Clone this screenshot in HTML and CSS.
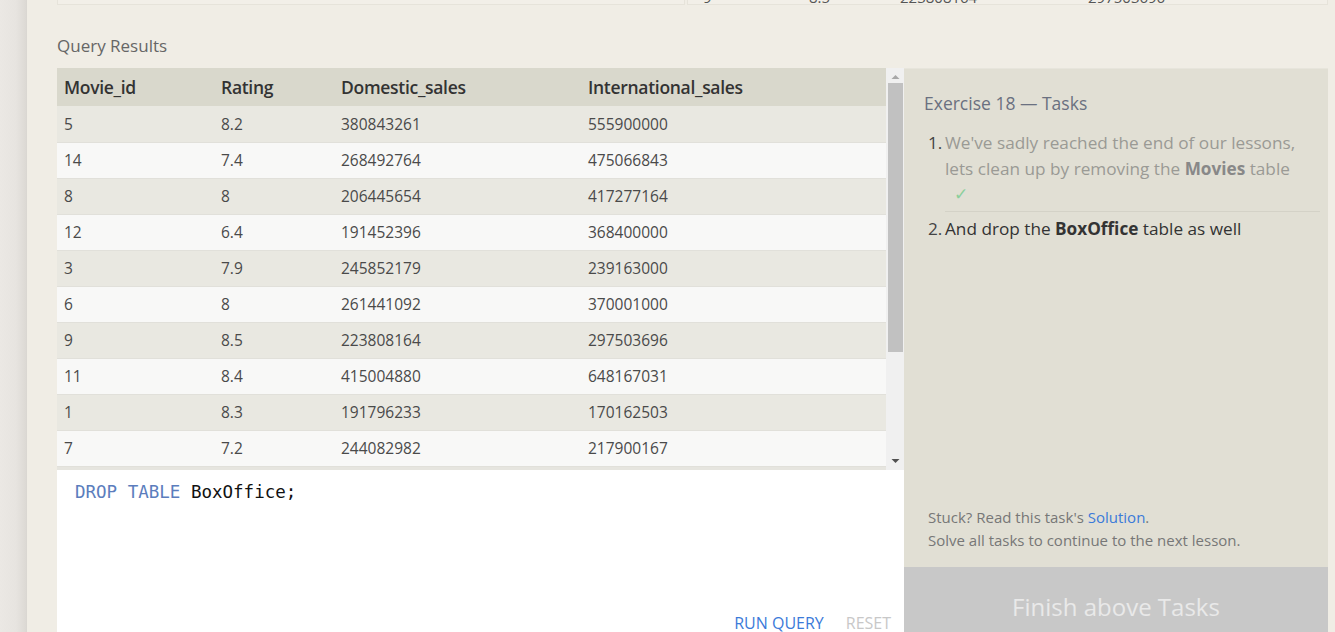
FILE: index.html
```html
<!DOCTYPE html>
<html lang="en">
<head>
<meta charset="utf-8">
<title>SQL Lesson — Exercise 18</title>
<link rel="stylesheet" href="styles.css">
</head>
<body>
<div class="page">
  <div class="gutter"></div>
  <main class="main">
    <div class="prev">
      <div class="prev-box"></div>
      <div class="prev-box prev-right">
        <div class="prev-row">
          <span class="pc pc1">9</span>
          <span class="pc pc2">8.5</span>
          <span class="pc pc3">223808164</span>
          <span class="pc pc4">297503696</span>
        </div>
      </div>
    </div>

    <h2 class="section-title">Query Results</h2>

    <div class="workspace">
      <div class="left">
        <div class="results">
          <div class="table-wrap">
            <table class="grid">
              <colgroup>
                <col class="c1"><col class="c2"><col class="c3"><col class="c4">
              </colgroup>
              <thead>
                <tr><th>Movie_id</th><th>Rating</th><th>Domestic_sales</th><th>International_sales</th></tr>
              </thead>
              <tbody>
                <tr><td>5</td><td>8.2</td><td>380843261</td><td>555900000</td></tr>
                <tr><td>14</td><td>7.4</td><td>268492764</td><td>475066843</td></tr>
                <tr><td>8</td><td>8</td><td>206445654</td><td>417277164</td></tr>
                <tr><td>12</td><td>6.4</td><td>191452396</td><td>368400000</td></tr>
                <tr><td>3</td><td>7.9</td><td>245852179</td><td>239163000</td></tr>
                <tr><td>6</td><td>8</td><td>261441092</td><td>370001000</td></tr>
                <tr><td>9</td><td>8.5</td><td>223808164</td><td>297503696</td></tr>
                <tr><td>11</td><td>8.4</td><td>415004880</td><td>648167031</td></tr>
                <tr><td>1</td><td>8.3</td><td>191796233</td><td>170162503</td></tr>
                <tr><td>7</td><td>7.2</td><td>244082982</td><td>217900167</td></tr>
              </tbody>
            </table>
            <div class="table-foot"></div>
          </div>
          <div class="scrollbar">
            <svg class="arrow arrow-up" width="9" height="6" viewBox="0 0 9 6"><path d="M0.5 5 L4.5 1 L8.5 5 Z" fill="#a8a8a8"/></svg>
            <div class="thumb"></div>
            <svg class="arrow arrow-down" width="9" height="6" viewBox="0 0 9 6"><path d="M0.5 1 L4.5 5 L8.5 1 Z" fill="#505050"/></svg>
          </div>
        </div>

        <div class="editor">
          <div class="code"><span class="kw">DROP</span> <span class="kw">TABLE</span> BoxOffice;</div>
          <div class="actions">
            <span class="btn-run">RUN QUERY</span>
            <span class="btn-reset">RESET</span>
          </div>
        </div>
      </div>

      <aside class="tasks">
        <h3 class="tasks-title">Exercise 18 — Tasks</h3>
        <ol class="task-list">
          <li class="task done">
            <span class="num">1.</span>
            <div class="task-text">We've sadly reached the end of our lessons, lets clean up by removing the <b>Movies</b> table
              <div class="check">✓</div>
            </div>
          </li>
          <li class="task">
            <span class="num">2.</span>
            <div class="task-text">And drop the <b>BoxOffice</b> table as well</div>
          </li>
        </ol>
        <div class="spacer"></div>
        <div class="stuck">
          <div>Stuck? Read this task's <span class="link">Solution</span>.</div>
          <div>Solve all tasks to continue to the next lesson.</div>
        </div>
        <div class="finish">Finish above Tasks</div>
      </aside>
    </div>
  </main>
</div>
</body>
</html>
```
FILE: styles.css
```css
* { box-sizing: border-box; }

html, body {
  margin: 0;
  padding: 0;
  height: 632px;
  overflow: hidden;
}

body {
  background: #f0ede5;
  font-family: "Open Sans", "Liberation Sans", sans-serif;
  color: #444;
}

.page {
  display: flex;
  height: 632px;
}

.gutter {
  width: 27px;
  flex: none;
  background: linear-gradient(to right, #ebe8e4 0, #e7e4e0 16px, #dcd9d4 26px, #d8d5d0 27px);
}

.main {
  flex: 1;
  padding: 0 7px 0 30px;
  display: flex;
  flex-direction: column;
  min-width: 0;
}

/* previous (cut-off) results */
.prev {
  display: flex;
  height: 5px;
  gap: 2px;
}

.prev-box {
  height: 5px;
  border: 1px solid #e6e3da;
  border-top: none;
  background: #f2efe8;
  overflow: hidden;
}

.prev-box:first-child { width: 628px; }
.prev-right { flex: 1; }

.prev-row {
  display: flex;
  margin-top: -13px;
  font-size: 15px;
  line-height: 20px;
  color: #555;
}

.pc1 { width: 121px; padding-left: 15px; }
.pc2 { width: 91px; }
.pc3 { width: 188px; }

.section-title {
  margin: 29px 0 10px;
  font-size: 17px;
  line-height: 24px;
  font-weight: 400;
  color: #666;
}

.workspace {
  display: flex;
  flex: 1;
  min-height: 0;
}

.left {
  width: 847px;
  flex: none;
  display: flex;
  flex-direction: column;
}

.results {
  display: flex;
  height: 402px;
  flex: none;
}

.table-wrap {
  width: 829px;
  display: flex;
  flex-direction: column;
  background: #e8e7e1;
}

.grid {
  width: 829px;
  border-collapse: collapse;
  table-layout: fixed;
  font-size: 15.5px;
}

.c1 { width: 157px; }
.c2 { width: 120px; }
.c3 { width: 247px; }
.c4 { width: auto; }

.grid th {
  height: 38px;
  background: #d9d8cc;
  text-align: left;
  font-weight: 600;
  font-size: 17.5px;
  color: #333;
  padding: 0 0 0 7px;
  letter-spacing: -0.3px;
}

.grid td {
  height: 36px;
  padding: 0 0 0 7px;
  color: #4a4a4a;
  border-bottom: 1px solid #e1e0da;
  white-space: nowrap;
}

.grid tbody tr:nth-child(odd) td { background: #e9e8e1; }
.grid tbody tr:nth-child(even) td { background: #f8f8f7; }

.table-foot {
  flex: 1;
  background: #e6e5df;
}

.scrollbar {
  width: 18px;
  flex: none;
  background: #f0f0f0;
  display: flex;
  flex-direction: column;
  align-items: center;
}

.arrow-up { margin-top: 6px; }

.thumb {
  width: 15px;
  height: 269px;
  margin-top: 3px;
  background: #c1c1c1;
}

.arrow-down { margin-top: auto; margin-bottom: 6px; }

/* editor */
.editor {
  flex: 1;
  background: #ffffff;
  display: flex;
  flex-direction: column;
  min-height: 170px;
}

.code {
  flex: 1;
  padding: 11px 0 0 18px;
  font-family: "DejaVu Sans Mono", "Liberation Mono", monospace;
  font-size: 17.5px;
  line-height: 22px;
  color: #111;
}

.kw { color: #5b7dbd; }

.actions {
  display: flex;
  justify-content: flex-end;
  gap: 22px;
  padding: 0 13px 0 0;
  height: 28px;
  font-size: 16px;
  line-height: 22px;
}

.btn-run { color: #3b7ad9; }
.btn-reset { color: #c8c8c8; }

/* tasks panel */
.tasks {
  flex: 1;
  background: #e1dfd4;
  border-top: 1px solid #e7e5dc;
  display: flex;
  flex-direction: column;
}

.tasks-title {
  margin: 21px 0 10px 20px;
  font-size: 17.5px;
  line-height: 26px;
  font-weight: 400;
  color: #6a7080;
}

.task-list {
  list-style: none;
  margin: 0 8px 0 24px;
  padding: 0;
  font-size: 17.2px;
  line-height: 26px;
}

.task {
  display: flex;
  padding: 4px 0 5px;
}

.task.done {
  border-bottom: 1px solid #d4d2c7;
  margin-left: 17px;
}

.task.done .num {
  margin-left: -17px;
}

.num {
  width: 17px;
  flex: none;
  color: #444;
}

.task-text { color: #333; padding-right: 12px; }
.task.done .task-text { color: #9a9a95; }
.task.done b { color: #888; }
.task b { font-weight: 700; }

.check {
  padding-left: 9px;
  color: #8ccf9c;
  line-height: 24px;
}

.spacer { flex: 1; }

.stuck {
  padding-left: 24px;
  font-size: 15px;
  line-height: 23px;
  color: #777;
  margin-bottom: 15px;
}

.link { color: #3b7ad9; }

.finish {
  height: 65px;
  flex: none;
  background: #c8c8c8;
  color: #e9e9e9;
  text-align: center;
  font-size: 24px;
  line-height: 32px;
  padding-top: 24px;
}
```
